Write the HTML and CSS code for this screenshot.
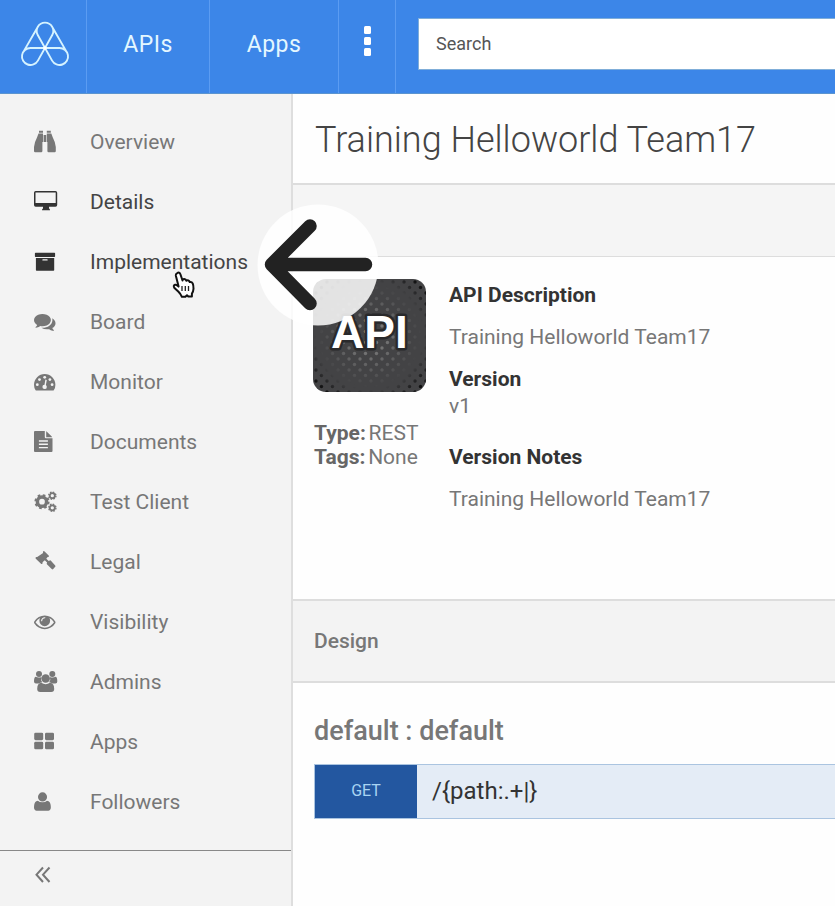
FILE: index.html
```html
<!DOCTYPE html>
<html lang="en">
<head>
<meta charset="utf-8">
<title>Training Helloworld Team17</title>
<link rel="stylesheet" href="styles.css">
</head>
<body>
<header class="topbar">
  <a class="brand"><svg width="50" height="46" viewBox="0 0 50 46" fill="none" stroke="#d5f3ff" stroke-width="1.9"><path d="M17.750 14A8.300 8.300 0 1 1 32.250 14L17.900 39.600A8.500 8.500 0 1 1 10.500 27H39.500A8.500 8.500 0 1 1 32.100 39.600ZM3.100 31.400 17.750 6M46.900 31.400 32.250 6"/><circle cx="25" cy="27" r="1.8" fill="#fff" stroke="none"/></svg></a>
  <a class="tab tab-apis">APIs</a>
  <a class="tab tab-apps">Apps</a>
  <a class="more"><i></i><i></i><i></i></a>
  <div class="search-wrap"><div class="search">Search</div></div>
</header>
<div class="layout">
  <aside class="sidebar">
    <nav class="menu">
      <a class="item"><svg class="icon" viewBox="0 0 24 24"><path d="M5 .8h4v2H5zM12.8.8h4v2h-4zM4.5 3.5H9V12H8.400v9q0 1.200-1.200 1.200H1.200Q0 22.200 0 21v-4Q.5 12 3 7.500ZM17.300 3.500H12.800V12h.6v9q0 1.200 1.200 1.200h6q1.200 0 1.200-1.200v-4q-.5-5-3-9.500ZM9.600 5h2.600v7H9.600z"/></svg><span>Overview</span></a>
      <a class="item active"><svg class="icon" viewBox="0 0 24 24"><path fill-rule="evenodd" d="M1.700 1h19.800q1.700 0 1.700 1.700V15q0 1.700-1.700 1.700h-6.500v1.800q1 .3 1 1.800H8q0-1.500 1-1.800v-1.800H1.700Q0 16.700 0 15V2.700Q0 1 1.700 1ZM1.500 2.500v10.500h20.200V2.500Z"/></svg><span>Details</span></a>
      <a class="item active"><svg class="icon" viewBox="0 0 24 24"><path fill-rule="evenodd" d="M1.500 2.700h19q.6 0 .6.600v3q0 .6-.6.600h-19q-.6 0-.6-.600v-3q0-.6.600-.600ZM1.900 8h18.300v12q0 .7-.7.700H2.600q-.7 0-.7-.700ZM9 9.200q-.7 0-.7.700t.7.700h4q.7 0 .7-.7T13 9.200Z"/></svg><span>Implementations</span></a>
      <a class="item"><svg class="icon" viewBox="0 0 24 24"><path transform="translate(0 .9) scale(.012)" d="M1408 768q0 139-94 257t-256.500 186.500-353.500 68.500q-86 0-176-16-124 88-278 128-36 9-86 16h-3q-11 0-20.500-8t-11.500-21q-1-3-1-6.500t.5-6.500 2-6l2.500-5 3.500-5.500 4-5 4.500-5 4-4.500q5-6 23-25t26-29.500 22.500-29 25-38.500 20.500-44q-124-72-195-177t-71-224q0-139 94-257t256.500-186.500 353.500-68.500 353.500 68.500 256.500 186.500 94 257zm384 256q0 120-71 224.500t-195 176.500q10 24 20.500 44t25 38.500 22.500 29 26 29.500 23 25q1 1 4 4.500t4.500 5 4 5 3.500 5.500l2.500 5 2 6 .5 6.500-1 6.500q-3 14-13 22t-22 7q-50-7-86-16-154-40-278-128-90 16-176 16-271 0-472-132 58 4 88 4 161 0 309-45t264-129q125-92 192-212t67-257q0-77-23-152 129 71 204 178t75 230z"/></svg><span>Board</span></a>
      <a class="item"><svg class="icon" viewBox="0 0 24 24"><path d="M10.700 4A10.700 10.700 0 0 1 21.400 14.700q0 3-1.500 5.400-.3.500-.8.500H2.300q-.5 0-.8-.5Q0 17.700 0 14.700A10.700 10.700 0 0 1 10.700 4Z"/><g class="cut"><circle cx="3.300" cy="14.700" r="1.400"/><circle cx="5.500" cy="9.600" r="1.400"/><circle cx="10.700" cy="7.300" r="1.400"/><circle cx="15.900" cy="9.600" r="1.400"/><circle cx="18.100" cy="14.700" r="1.400"/><path d="m11.400 9.500 1.400.4-.9 5q1 .8.900 2a2.200 2.200 0 1 1-2.300-2.200Z"/></g></svg><span>Monitor</span></a>
      <a class="item"><svg class="icon" viewBox="0 0 24 24"><path fill-rule="evenodd" d="M1 1h9.800v6.300q0 1 1 1h6.700V21q0 1-1 1H1q-1 0-1-1V2q0-1 1-1ZM12.200 1.300q.5.200.9.600l4.400 4.400q.4.400.6.900h-5.900ZM4.900 10.300v1.400h9v-1.400ZM4.900 13.600V15h9v-1.400ZM4.900 16.900v1.400h9v-1.400Z"/></svg><span>Documents</span></a>
      <a class="item"><svg class="icon gear" viewBox="0 0 24 24"><circle cx="8" cy="11.700" r="4.600" stroke-width="3.500"/><circle cx="8" cy="11.700" r="6.500" stroke-width="2.200" stroke-dasharray="2.600 2.505"/><circle cx="18.300" cy="5.700" r="2.500" stroke-width="1.700"/><circle cx="18.300" cy="5.700" r="3.600" stroke-width="1.400" stroke-dasharray="1.600 1.230"/><circle cx="18.300" cy="17.800" r="2.500" stroke-width="1.700"/><circle cx="18.300" cy="17.800" r="3.600" stroke-width="1.400" stroke-dasharray="1.600 1.230"/></svg><span>Test Client</span></a>
      <a class="item"><svg class="icon" viewBox="0 0 24 24"><path d="M9.300 1.200q.7-.4 1.300.2l4.100 4q.5.700 0 1.300-.6.600-1.200.4L12.300 8.700l2.400 2.400 1-.7q.5-.3 1 .2l4.500 4.800q.6.700 0 1.400l-2 2.200q-.7.800-1.500 0l-4.800-4.800q-.5-.6.200-1.700l-2.300-2.300-2.300 2.100q.4.700-.2 1.400-.6.600-1.300 0l-5.200-5q-.6-.7 0-1.400.6-.5 1.400-.2L9.100 3q-.5-1 .2-1.800Z"/></svg><span>Legal</span></a>
      <a class="item"><svg class="icon" viewBox="0 0 24 24"><path transform="translate(0 .8) scale(.012)" d="M1664 960q-152-236-381-353 61 104 61 225 0 185-131.500 316.500t-316.500 131.500-316.500-131.500-131.500-316.500q0-121 61-225-229 117-381 353 133 205 333.500 326.500t434.500 121.500 434.500-121.500 333.500-326.500zm-720-384q0-20-14-34t-34-14q-125 0-214.500 89.500t-89.500 214.500q0 20 14 34t34 14 34-14 14-34q0-86 61-147t147-61q20 0 34-14t14-34zm848 384q0 34-20 69-140 230-376.500 368.500t-499.500 138.500-499.500-139-376.500-368q-20-35-20-69t20-69q140-229 376.500-368t499.500-139 499.500 139 376.500 368q20 35 20 69z"/></svg><span>Visibility</span></a>
      <a class="item"><svg class="icon" viewBox="0 0 24 24"><circle cx="5" cy="4" r="3"/><circle cx="18.300" cy="4" r="3"/><path d="M1.500 6.800q3.200 1.500 6 .2-1.300 3 .7 5.300-2 .1-3.300 1.300H2Q0 13.600 0 11.500q0-4 1.500-4.700ZM21.800 6.800q-3.200 1.500-6 .2 1.300 3-.7 5.300 2 .1 3.300 1.300h2.900q2 0 2-2.100 0-4-1.500-4.700Z"/><circle cx="11.650" cy="8.500" r="4.300"/><path d="M7.300 12.800q4.300 2.900 8.700 0 4.200.2 4.200 6.200 0 3-3 3H6.200q-3 0-3-3 0-6 4.100-6.200Z"/></svg><span>Admins</span></a>
      <a class="item"><svg class="icon" viewBox="0 0 24 24"><rect x=".2" y="2.700" width="9" height="7.500" rx="1.400"/><rect x="11" y="2.700" width="9" height="7.500" rx="1.400"/><rect x=".2" y="11.800" width="9" height="7.500" rx="1.400"/><rect x="11" y="11.800" width="9" height="7.500" rx="1.400"/></svg><span>Apps</span></a>
      <a class="item"><svg class="icon" viewBox="0 0 24 24"><path transform="translate(-2.800 .8) scale(.0118 .012)" d="M1664 1399q0 109-62.500 187t-150.500 78h-1000q-88 0-150.500-78t-62.500-187q0-85 8.500-160.500t31.500-152 58.500-131 94-89 134.500-34.500q131 128 386 128t386-128q76 0 134.500 34.500t94 89 58.500 131 31.500 152 8.500 160.500zm-320-887q0 159-112.500 271.500t-271.500 112.500-271.500-112.500-112.500-271.500 112.500-271.500 271.500-112.500 271.500 112.500 112.500 271.500z"/></svg><span>Followers</span></a>
    </nav>
    <div class="collapse"><svg width="16" height="18" viewBox="0 0 16 18" fill="none" stroke="#777" stroke-width="2"><path d="M8 1.500 1.500 8.700 8 16M14.500 1.500 8 8.700l6.500 7.300"/></svg></div>
  </aside>
  <main class="main">
    <h1 class="title">Training Helloworld Team17</h1>
    <div class="strip"></div>
    <section class="info">
      <div class="summary">
        <svg class="tile" width="113" height="113" viewBox="0 0 113 113">
          <defs>
            <pattern id="dots" width="11" height="11" patternUnits="userSpaceOnUse"><circle cx="3" cy="3" r="1.700"/><circle cx="8.500" cy="8.500" r="1.700"/></pattern>
            <pattern id="lights" width="11" height="11" patternUnits="userSpaceOnUse"><circle cx="3" cy="3" r="1.700" fill="#858585"/><circle cx="8.500" cy="8.500" r="1.700" fill="#858585"/></pattern>
            <radialGradient id="edge" r=".72"><stop offset=".66" stop-color="#000"/><stop offset=".95" stop-color="#fff"/></radialGradient>
            <radialGradient id="center" r=".46"><stop offset=".1" stop-color="#fff"/><stop offset="1" stop-color="#000"/></radialGradient>
            <mask id="edgeMask"><rect width="113" height="113" fill="url(#edge)"/></mask>
            <mask id="centerMask"><rect width="113" height="113" fill="url(#center)"/></mask>
            <clipPath id="round"><rect width="113" height="113" rx="13"/></clipPath>
          </defs>
          <g clip-path="url(#round)"><rect width="113" height="113" fill="#434345"/><rect width="113" height="113" fill="url(#dots)" mask="url(#edgeMask)"/><rect width="113" height="113" fill="url(#lights)" mask="url(#centerMask)"/></g>
          <text class="tile-text" x="18" y="69">API</text>
        </svg>
        <div class="meta"><b>Type:</b> REST</div>
        <div class="meta"><b>Tags:</b> None</div>
      </div>
      <dl class="facts">
        <dt>API Description</dt><dd class="desc">Training Helloworld Team17</dd>
        <dt>Version</dt><dd class="version">v1</dd>
        <dt>Version Notes</dt><dd class="desc">Training Helloworld Team17</dd>
      </dl>
    </section>
    <h2 class="design">Design</h2>
    <section class="ops">
      <h3>default : default</h3>
      <div class="op"><span class="verb">GET</span><span class="path">/{path:.+|}</span></div>
    </section>
  </main>
</div>
<svg class="pointer-arrow" width="122" height="122" viewBox="257 204 122 122"><circle cx="318" cy="265" r="60.500" fill="#fff" fill-opacity=".85"/><path d="M365.500 264.500H271.500L310 226M271.500 264.500 310 303.500" fill="none" stroke="#222" stroke-width="13.500" stroke-linecap="round" stroke-linejoin="round"/></svg>
<svg class="cursor" width="26" height="28" viewBox="0 0 26 28"><path d="M6 2.300Q8.500.500 9.500 3.500l2 6q.5-2 2.500-1.300 1 .3 1.300 1.500 1.500-1.300 3 .5l.4.900q2-.6 3 1.300.8 1.800.8 5.300-.2 3-1.600 4.900v2.900h-3.600l-1.300-1.300-1.600 1.600h-3.500q-1.400-3-3.400-5l-4-3.700q-1.700-2.500.6-3.300 1.500-.4 3.500 1.800L4.800 4.500q-.2-1.500 1.200-2.200Z" fill="#fff" stroke="#111" stroke-width="2" stroke-linejoin="round"/><path d="M11 15v5M14.300 15v5M17.500 15v5" stroke="#222" stroke-width="1.300"/></svg>
</body>
</html>
```
FILE: styles.css
```css
* { box-sizing: border-box; }
body { margin: 0; height: 906px; overflow: hidden; position: relative; background: #fefefe; color: #777; font: 21px/24px Roboto, sans-serif; }
h1, h2, h3, dl, dd { margin: 0; }
.topbar { display: flex; height: 94px; background: #3c86e8; border-bottom: 1px solid #5b94cf; color: #e4f7ff; }
.topbar > a { border-right: 1px solid #5b9cf2; height: 93px; }
.brand { width: 87px; padding: 21px 0 0 20px; }
.tab { padding-top: 33px; font-size: 23px; line-height: 24px; text-align: center; letter-spacing: .5px; }
.tab-apis { width: 123px; }
.tab-apps { width: 129px; }
.more { width: 57px; display: flex; flex-direction: column; gap: 3px; padding: 26px 0 0 25px; }
.more i { width: 7px; height: 8px; background: #fff; border-radius: 1.500px; }
.search-wrap { flex: 1; padding: 18px 0 0 22px; }
.search { height: 52px; background: #fff; border: 1px solid #80aed9; border-right: 0; padding: 13px 17px; color: #555; font-size: 18px; }
.layout { display: flex; height: 812px; }
.sidebar { width: 293px; background: #f3f3f3; border-right: 2px solid #dedede; display: flex; flex-direction: column; }
.menu { height: 757px; padding-top: 18px; border-bottom: 1px solid #888; }
.item { display: flex; height: 60px; align-items: center; padding-left: 34px; }
.item span { margin-left: 32px; }
.icon { width: 24px; height: 24px; fill: #777; }
.active { color: #444; }
.active .icon { fill: #333; }
.item .cut { fill: #f3f3f3; }
.item .gear { fill: none; stroke: #777; }
.collapse { padding: 15px 0 0 35px; line-height: 0; }
.main { flex: 1; min-width: 0; }
.title { height: 91px; padding: 22px 0 0 22px; font-size: 36px; line-height: 48px; font-weight: 300; color: #444; border-bottom: 2px solid #ddd; white-space: nowrap; }
.strip { height: 72px; background: #f5f5f5; border-bottom: 1px solid #ddd; }
.info { height: 342px; display: flex; padding: 22px 0 0 20px; }
.summary { width: 136px; }
.tile { display: block; margin-bottom: 29px; }
.tile-text { font: bold 46px "Liberation Sans", sans-serif; fill: #fff; stroke: #29292b; stroke-width: 5px; paint-order: stroke; stroke-linejoin: round; }
.meta { padding-left: 1px; white-space: nowrap; word-spacing: -2.500px; }
.meta b { color: #666; }
.facts { padding-top: 4px; }
.facts dt { font-weight: 700; color: #333; }
.desc { padding: 18px 0; white-space: nowrap; }
.version { padding: 3px 0 27px; }
.design { height: 84px; padding: 28px 0 0 21px; background: #f3f3f3; border: solid #ddd; border-width: 2px 0; font-weight: 500; font-size: 21px; line-height: 24px; }
.ops { padding: 33px 0 0 21px; }
.ops h3 { font-size: 27px; line-height: 30px; font-weight: 500; margin-bottom: 18px; }
.op { display: flex; height: 55px; border: 1px solid #aac4e0; border-right: 0; background: #e4ecf6; line-height: 52px; }
.verb { width: 102px; background: #2357a0; color: #a9d4f2; text-align: center; font-size: 16px; }
.path { padding-left: 15px; font-size: 24px; color: #333; }
.pointer-arrow { position: absolute; left: 257px; top: 204px; }
.cursor { position: absolute; left: 171px; top: 271px; }
```
